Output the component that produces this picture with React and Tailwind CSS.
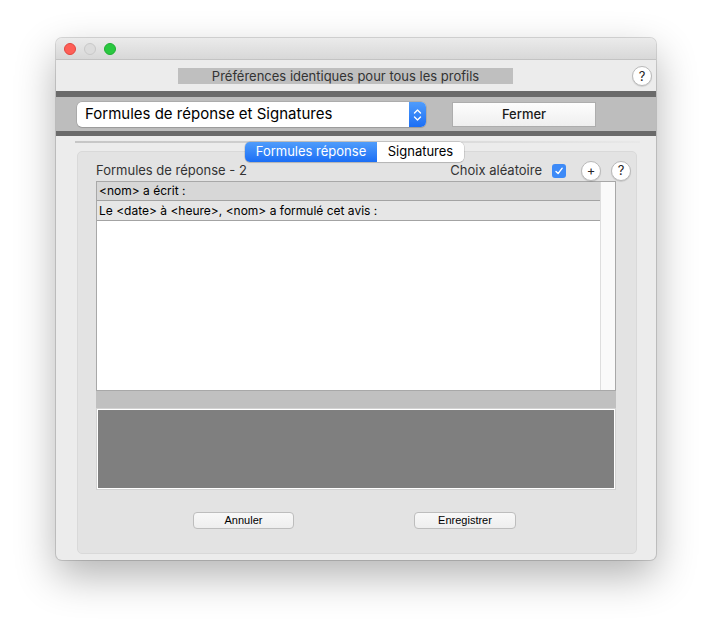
import React from "react";

const sf = { fontFamily: "Inter, 'Noto Sans', sans-serif" };

function HelpButton({ children = "?" }) {
  return (
    <div className="w-[20px] h-[20px] rounded-full bg-white border border-[#b9b9b9] shadow-[0_1px_1px_rgba(0,0,0,0.12)] flex items-center justify-center text-[13px] leading-none text-[#262626]">
      {children}
    </div>
  );
}

export default function App() {
  return (
    <div className="w-[712px] h-[634px] bg-white pl-[56px] pt-[38px]" style={sf}>
      <div className="w-[600px] h-[522px] rounded-[6px] bg-[#ececec] overflow-hidden flex flex-col shadow-[0_0_0_1px_rgba(0,0,0,0.14),0_16px_40px_rgba(0,0,0,0.3)]">
        {/* title bar */}
        <div className="h-[22px] shrink-0 bg-gradient-to-b from-[#ebebeb] to-[#d8d8d8] border-b border-[#c3c3c3] flex items-center pl-[8px] gap-[8px]">
          <span className="w-[12px] h-[12px] rounded-full bg-[#fe5f57] border border-[#e1463f]" />
          <span className="w-[12px] h-[12px] rounded-full bg-[#dcdcdc] border border-[#c8c8c8]" />
          <span className="w-[12px] h-[12px] rounded-full bg-[#2ac840] border border-[#1fae33]" />
        </div>

        {/* header */}
        <div className="h-[31px] shrink-0 flex items-start">
          <div className="ml-[122px] mt-[8px] w-[335px] h-[16px] bg-[#bfbfbf] text-center text-[13px] leading-[16px] text-[#333333]">
            Préférences identiques pour tous les profils
          </div>
          <div className="ml-auto mr-[4px] mt-[6px]">
            <HelpButton />
          </div>
        </div>

        <div className="h-[6px] shrink-0 bg-[#6a6a6a]" />
        <div className="h-[34px] shrink-0 bg-[#bdbdbd] flex items-start pt-[5px] pl-[21px]">
          <div className="w-[349px] h-[25px] rounded-[5px] bg-white flex shadow-[0_0_0_0.5px_rgba(0,0,0,0.18),0_1px_1px_rgba(0,0,0,0.1)] overflow-hidden">
            <div className="flex-1 pl-[8px] flex items-center text-[15px] text-black">
              Formules de réponse et Signatures
            </div>
            <div className="w-[17px] bg-gradient-to-b from-[#4f9cfb] to-[#1b6ef5] flex items-center justify-center">
              <svg width="9" height="14" viewBox="0 0 9 14" fill="none" stroke="white" strokeWidth="1.4" strokeLinecap="round" strokeLinejoin="round">
                <path d="M1.5 5 L4.5 2 L7.5 5" />
                <path d="M1.5 9 L4.5 12 L7.5 9" />
              </svg>
            </div>
          </div>
          <div className="ml-[26px] w-[144px] h-[25px] pt-[1px] bg-gradient-to-b from-[#fdfdfd] to-[#efefef] border border-[#adadad] flex items-center justify-center text-[13px] font-medium text-[#1a1a1a]">
            Fermer
          </div>
        </div>
        <div className="h-[5px] shrink-0 bg-[#6a6a6a]" />

        <div className="mt-[5px] ml-[19px] mr-[16px] h-[2px] shrink-0 bg-gradient-to-r from-[#c6c6c6] via-[#d4d4d4] to-[#e8e8e8]" />

        {/* tab box */}
        <div className="relative mt-[8px] ml-[21px] w-[560px] h-[403px] shrink-0 rounded-[5px] bg-[#e3e3e3] border border-[#d9d9d9] pt-[9px] pl-[18px]">
          <div className="absolute left-[167px] top-[-10px] w-[219px] h-[20px] flex rounded-[5px] overflow-hidden shadow-[0_0_0_0.5px_rgba(0,0,0,0.2),0_1px_1px_rgba(0,0,0,0.12)] text-[13px]">
            <div className="w-[132px] bg-gradient-to-b from-[#4f9cfb] to-[#1b6ef5] text-white flex items-center justify-center">
              Formules réponse
            </div>
            <div className="flex-1 bg-white text-black flex items-center justify-center">Signatures</div>
          </div>

          <div className="h-[19px] flex items-center pr-[5px] text-[13px] text-[#333333]">
            <span>Formules de réponse - 2</span>
            <span className="ml-auto">Choix aléatoire</span>
            <span className="ml-[10px] w-[14px] h-[14px] rounded-[3px] bg-[#3d8af7] flex items-center justify-center">
              <svg width="10" height="10" viewBox="0 0 10 10" fill="none" stroke="white" strokeWidth="1.4" strokeLinecap="round" strokeLinejoin="round">
                <path d="M2 5.4 L4.1 7.6 L8.2 2.2" />
              </svg>
            </span>
            <span className="ml-[15px]">
              <HelpButton>+</HelpButton>
            </span>
            <span className="ml-[10px]">
              <HelpButton />
            </span>
          </div>

          <div className="mt-[1px] w-[520px] h-[210px] border border-[#a8a8a8] bg-white flex text-[12px] text-black">
            <div className="flex-1 flex flex-col">
              <div className="h-[19px] bg-[#d7d7d7] border-b border-[#a3a3a3] pl-[2px] flex items-center">
                {"<nom> a écrit :"}
              </div>
              <div className="h-[20px] bg-[#e6e6e6] border-b border-[#a3a3a3] pl-[2px] flex items-center">
                {"Le <date> à <heure>, <nom> a formulé cet avis :"}
              </div>
            </div>
            <div className="w-[15px] bg-[#fafafa] border-l border-[#dedede]" />
          </div>
          <div className="w-[520px] h-[17px] bg-[#c0c0c0]" />
          <div className="w-[520px] h-[82px] border border-[#d2d2d2]">
            <div className="w-full h-full bg-[#7f7f7f] border border-white" />
          </div>

          <div className="mt-[22px] flex text-[11px] text-black" style={{ fontFamily: "'Liberation Sans', Arial, sans-serif" }}>
            <div className="ml-[97px] w-[101px] h-[17px] rounded-[4px] bg-gradient-to-b from-[#f8f8f8] to-[#eeeeee] border border-[#bdbdbd] flex items-center justify-center">
              Annuler
            </div>
            <div className="ml-[120px] w-[102px] h-[17px] rounded-[4px] bg-gradient-to-b from-[#f8f8f8] to-[#eeeeee] border border-[#bdbdbd] flex items-center justify-center">
              Enregistrer
            </div>
          </div>
        </div>
      </div>
    </div>
  );
}
